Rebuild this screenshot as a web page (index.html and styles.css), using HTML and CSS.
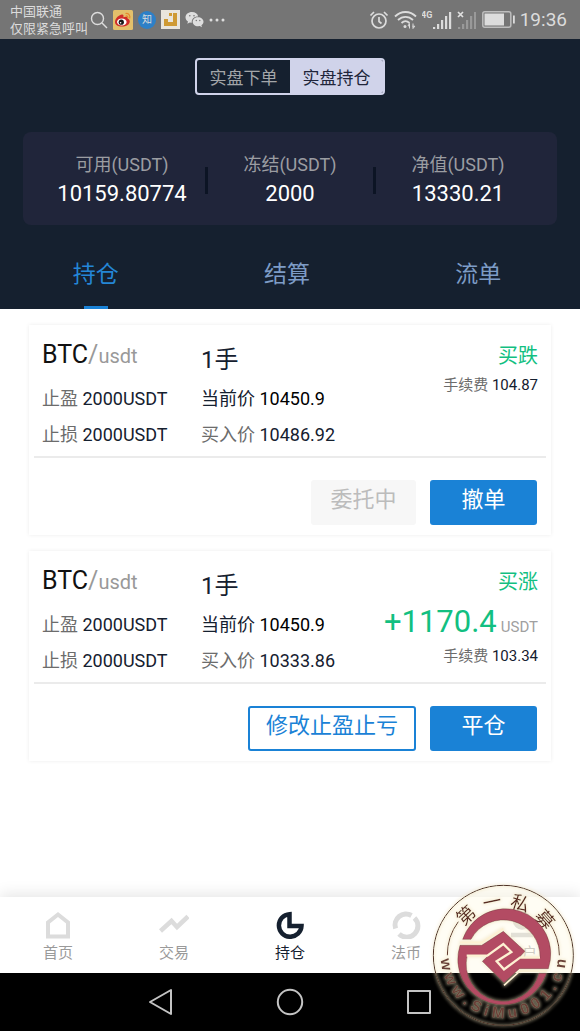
FILE: index.html
```html
<!DOCTYPE html>
<html lang="zh-CN">
<head>
<meta charset="utf-8">
<meta name="viewport" content="width=device-width, initial-scale=1">
<title>实盘持仓</title>
<link rel="stylesheet" href="styles.css">
</head>
<body>
<div class="screen">
  <div class="status">
    <div class="carrier"><span>中国联通</span><span>仅限紧急呼叫</span></div>
    <div class="notices">
      <svg width="18" height="18" viewBox="0 0 18 18" fill="none" stroke="#dcdcdc" stroke-width="1.4"><circle cx="7.5" cy="7.5" r="6"/><path d="M12 12l5 5"/></svg>
      <svg width="20" height="20" viewBox="0 0 20 20"><rect width="20" height="20" rx="1.5" fill="#e3c06b"/><path d="M2 12c0-4 5-8 7.500-7.500 1.500.4 1 2 .8 2.800 2-.9 4.500-.8 4.300 1.200 3 1.500 2.500 4 1 5.700-3 3.500-13.600 3.500-13.600-2.200z" fill="#d02c28"/><ellipse cx="8.800" cy="12" rx="4.800" ry="3.500" fill="#fff"/><circle cx="8.300" cy="12.200" r="2.600" fill="#191919"/><circle cx="7.600" cy="12.800" r=".8" fill="#fff"/><path d="M12.500 3.500c3-.5 5 2 4.200 4.800M12.800 6c1.500-.2 2.300.8 2 2" fill="none" stroke="#e8862b" stroke-width="1.200"/></svg>
      <span class="zhihu">知</span>
      <svg width="19" height="19" viewBox="0 0 19 19"><rect width="19" height="19" fill="#e9e5dc"/><path d="M3 9h4v3h5V3h4v13H3zM8 3h3v3H8z" fill="#cf9a33"/></svg>
      <svg width="19" height="17" viewBox="0 0 19 17"><path d="M7 1C3.200 1 .5 3.400.5 6.300c0 1.800 1 3.200 2.500 4.200l-.7 2.200 2.500-1.300 2 .3C6.300 8 9 5.300 13.200 5.400 12.600 2.800 10.200 1 7 1z" fill="#dedede"/><path d="M13 6.300c-3 0-5.300 2-5.300 4.500s2.300 4.500 5.300 4.500l1.800-.3 2.200 1.200-.6-1.900c1.300-.9 2.100-2.100 2.100-3.500 0-2.500-2.500-4.500-5.500-4.500z" fill="#dedede"/><g fill="#757575"><circle cx="4.800" cy="4.800" r=".8"/><circle cx="9" cy="4.800" r=".8"/><circle cx="11.300" cy="9.500" r=".7"/><circle cx="14.800" cy="9.500" r=".7"/></g></svg>
      <svg width="16" height="4" viewBox="0 0 16 4" fill="#dedede"><circle cx="2" cy="2" r="1.500"/><circle cx="8" cy="2" r="1.500"/><circle cx="14" cy="2" r="1.500"/></svg>
    </div>
    <div class="system">
      <svg width="20" height="20" viewBox="0 0 20 20" fill="none" stroke="#dcdcdc" stroke-width="1.700"><circle cx="10" cy="11" r="7"/><path d="M10 7v4.500l2.500 2M1.500 5.500L5 2M18.500 5.500L15 2"/></svg>
      <svg width="23" height="20" viewBox="0 0 23 20" fill="none" stroke="#dcdcdc" stroke-width="1.800"><path d="M1 6.500c6-6 15-6 21 0M4 10c4.500-4.300 10.500-4.300 15 0M7.500 13c2.500-2.300 5.500-2.300 8 0"/><circle cx="11" cy="16.500" r="1.500" fill="#dcdcdc" stroke="none"/><path d="M15.500 18.500v-5l-1.500 2.300h2M19 13.500v5l1.800-2.300h-2.300" stroke-width="1"/></svg>
      <svg width="30" height="20" viewBox="0 0 30 20"><text class="net" x="-1" y="8">4G</text><path d="M11 17h2.200v2H11zM15 14h2.200v5H15zM19 10h2.200v9H19zM23 6h2.200v13H23zM27 2h2.200v17H27z" fill="#dcdcdc"/></svg>
      <svg width="20" height="20" viewBox="0 0 20 20"><path d="M1 17h2.200v2H1zM5 14h2.200v5H5zM9 10h2.200v9H9zM13 6h2.200v13H13zM17 2h2v17h-2z" fill="#999"/><path d="M1 2l5 5M6 2L1 7" stroke="#e0e0e0" stroke-width="1.700"/></svg>
      <svg width="33" height="17" viewBox="0 0 33 17"><rect x=".8" y=".8" width="28" height="15.400" rx="2" fill="none" stroke="#bdbdbd" stroke-width="1.500"/><rect x="2.500" y="2.500" width="19.500" height="12" fill="#dcdcdc"/><path d="M31 4.500h1.800v8H31z" fill="#dcdcdc"/></svg>
      <span class="clock">19:36</span>
    </div>
  </div>

  <header class="top">
    <div class="switch"><button type="button">实盘下单</button><button type="button" class="on">实盘持仓</button></div>
    <dl class="stats">
      <div><dt>可用(USDT)</dt><dd>10159.80774</dd></div>
      <div><dt>冻结(USDT)</dt><dd>2000</dd></div>
      <div><dt>净值(USDT)</dt><dd>13330.21</dd></div>
    </dl>
    <nav class="tabs"><button type="button" class="on">持仓</button><button type="button">结算</button><button type="button">流单</button></nav>
  </header>

  <main class="list">
    <article class="card">
      <div class="info">
        <div><h2>BTC<i>/</i><small>usdt</small></h2><p>止盈 <b>2000USDT</b></p><p>止损 <b>2000USDT</b></p></div>
        <div><h3>1手</h3><p class="now">当前价 <b>10450.9</b></p><p>买入价 <b>10486.92</b></p></div>
        <div class="side"><strong>买跌</strong><p>手续费 <b>104.87</b></p></div>
      </div>
      <div class="actions"><button type="button" class="muted" disabled>委托中</button><button type="button" class="solid">撤单</button></div>
    </article>
    <article class="card">
      <div class="info">
        <div><h2>BTC<i>/</i><small>usdt</small></h2><p>止盈 <b>2000USDT</b></p><p>止损 <b>2000USDT</b></p></div>
        <div><h3>1手</h3><p class="now">当前价 <b>10450.9</b></p><p>买入价 <b>10333.86</b></p></div>
        <div class="side"><strong>买涨</strong><div class="profit">+1170.4 <small>USDT</small></div><p>手续费 <b>103.34</b></p></div>
      </div>
      <div class="actions"><button type="button" class="line">修改止盈止亏</button><button type="button" class="solid">平仓</button></div>
    </article>
  </main>

  <nav class="bottom">
    <a href="#home"><svg viewBox="0 0 30 28"><path d="M5 25.500V11.500L15 3.500l10 8v14z" fill="none" stroke="#dcdcdc" stroke-width="4"/></svg>首页</a>
    <a href="#trade"><svg viewBox="0 0 30 28"><path d="M1.500 20l11-10 5.500 6L29 5.500" fill="none" stroke="#dcdcdc" stroke-width="4.500"/></svg>交易</a>
    <a href="#hold" class="on"><svg viewBox="0 0 30 28"><path d="M14.500 3.200A11.300 11.300 0 1 0 26.500 15H14.500z" fill="none" stroke="#15202f" stroke-width="4.500"/></svg>持仓</a>
    <a href="#coin"><svg viewBox="0 0 30 28"><g fill="none" stroke="#dcdcdc" stroke-width="5"><path d="M4.600 17.500A11 11 0 0 1 20.500 4.500"/><path d="M23.500 7A11 11 0 0 1 8 23"/></g></svg>法币</a>
    <a href="#me"><svg viewBox="0 0 30 28"><circle cx="15" cy="9.500" r="7" fill="none" stroke="#c4c4c4" stroke-width="4.500"/><path d="M4 24h22" stroke="#c4c4c4" stroke-width="4.500"/></svg>账户</a>
  </nav>

  <div class="keys">
    <button type="button" aria-label="返回"><svg viewBox="0 0 28 28"><path d="M24 2v24L3 14z"/></svg></button>
    <button type="button" aria-label="主屏幕"><svg viewBox="0 0 28 28"><circle cx="14" cy="14" r="12.200"/></svg></button>
    <button type="button" aria-label="最近任务"><svg viewBox="0 0 28 28"><rect x="3" y="3" width="22" height="22"/></svg></button>
  </div>

  <svg class="stamp" viewBox="0 0 465 465" aria-label="第一私募">
    <defs>
      <filter id="glow" x="-20%" y="-20%" width="140%" height="140%">
        <feMorphology in="SourceAlpha" operator="dilate" radius="2"/><feGaussianBlur stdDeviation="4"/>
        <feComponentTransfer result="a"><feFuncA type="linear" slope=".45"/></feComponentTransfer>
        <feFlood flood-color="#efdfb8"/><feComposite in2="a" operator="in" result="g"/>
        <feMerge><feMergeNode in="g"/><feMergeNode in="SourceGraphic"/></feMerge>
      </filter>
      <clipPath id="upper"><path d="M0 0h465v291H0z"/></clipPath>
    </defs>
    <circle cx="235" cy="238" r="210" fill="#fffcea" fill-opacity=".5" clip-path="url(#upper)"/>
    <g filter="url(#glow)">
      <circle cx="235" cy="238" r="210" fill="none" stroke="#4a2a20" stroke-width="3"/>
      <path d="M100 137A168 168 0 0 0 67 238M370 137A168 168 0 0 1 403 238" fill="none" stroke="#5a3024" stroke-width="3"/>
      <g class="seal">
        <text x="235" y="94" transform="rotate(-43 235 238)">第</text>
        <text x="235" y="94" transform="rotate(-12 235 238)">一</text>
        <text x="235" y="94" transform="rotate(18 235 238)">私</text>
        <text x="235" y="94" transform="rotate(49 235 238)">募</text>
      </g>
      <g class="site">
        <text x="235" y="426" transform="rotate(81 235 238)">w</text>
        <text x="235" y="426" transform="rotate(66 235 238)">w</text>
        <text x="235" y="426" transform="rotate(51 235 238)">w</text>
        <text x="235" y="426" transform="rotate(39 235 238)">.</text>
        <text x="235" y="426" transform="rotate(28 235 238)">S</text>
        <text x="235" y="426" transform="rotate(17 235 238)">i</text>
        <text x="235" y="426" transform="rotate(5 235 238)">M</text>
        <text x="235" y="426" transform="rotate(-9 235 238)">u</text>
        <text x="235" y="426" transform="rotate(-22 235 238)">0</text>
        <text x="235" y="426" transform="rotate(-34 235 238)">0</text>
        <text x="235" y="426" transform="rotate(-47 235 238)">1</text>
        <text x="235" y="426" transform="rotate(-57 235 238)">.</text>
        <text x="235" y="426" transform="rotate(-68 235 238)">c</text>
        <text x="235" y="426" transform="rotate(-82 235 238)">n</text>
      </g>
      <path fill="#b34b64" stroke="#74303c" stroke-width="1.500" d="M113 190A134 134 0 0 1 370 278H283L237 320 172 256 191 238H127A110 110 0 0 0 342 292H364A134 134 0 0 1 105 208H170L235 166 300 226 281 246H345A110 110 0 0 0 138 190z"/>
      <path d="M125 239H187L235 204 259 228 215 256 237 280 285 245H345" fill="none" stroke="#fdf1d2" stroke-width="7"/>
      <path d="M105 199H170L235 158M366 285H285L237 328" fill="none" stroke="#fdf1d2" stroke-width="5"/>
    </g>
  </svg>
</div>
</body>
</html>
```
FILE: styles.css
```css
* { box-sizing: border-box; margin: 0; padding: 0; }
body { font-family: Roboto, "Noto Sans CJK SC", sans-serif; background: #fff; color: #15202f; }
button { font: inherit; border: 0; background: none; color: inherit; }
b, i, strong, h2, h3 { font-weight: 400; font-style: normal; }
.screen { position: relative; min-height: 100vh; display: flex; flex-direction: column; }

.status { height: 39px; background: #757575; color: #dcdcdc; display: flex; align-items: center; padding: 0 13px 0 10px; }
.carrier { display: flex; flex-direction: column; font-size: 13px; line-height: 17px; width: 80px; white-space: nowrap; }
.notices { display: flex; align-items: center; gap: 5px; }
.zhihu { width: 18px; height: 18px; border-radius: 50%; background: #2d80c8; font-size: 10px; line-height: 18px; text-align: center; }
.system { display: flex; align-items: center; gap: 5px; margin-left: auto; }
.net { font: 700 9px Roboto, sans-serif; fill: #dcdcdc; }
.clock { font-size: 19px; }

.top { background: #15202f; padding-top: 19px; }
.switch { width: 190px; height: 37px; margin: 0 auto; display: flex; border: 2px solid #d0d3ea; border-radius: 4px; overflow: hidden; }
.switch button { flex: 1; font-size: 17px; color: #a3a6a9; }
.switch .on { background: #d0d3ea; color: #20253a; }
.stats { margin: 37px 23px 0; padding: 21px 15px 0; height: 93px; background: #20253a; border-radius: 8px; display: flex; text-align: center; }
.stats div { flex: 1; position: relative; }
.stats div + div::before { content: ""; position: absolute; left: -1px; top: 14px; width: 3px; height: 27px; background: #0c1424; }
.stats dt { font-size: 18px; line-height: 24px; color: #9b9da2; }
.stats dd { font-size: 22px; line-height: 34px; color: #fff; }
.tabs { display: flex; padding-right: 6px; margin-top: 12px; height: 72px; }
.tabs button { flex: 1; font-size: 23px; padding-bottom: 3px; color: #7d9cc6; position: relative; }
.tabs .on { color: #2486d6; }
.tabs .on::after { content: ""; position: absolute; left: 50%; bottom: 0; width: 24px; height: 3px; margin-left: -12px; background: #1a82d6; }

.list { flex: 1; padding: 16px 29px; display: flex; flex-direction: column; gap: 16px; }
.card { box-shadow: 0 0 4px rgba(0, 0, 0, .08); background: #fff; }
.info { display: grid; grid-template-columns: 159px 1fr auto; margin: 0 5px; padding: 8px 8px 3px; border-bottom: 2px solid #ebebeb; }
.info h2, .info h3 { line-height: 44px; height: 48px; font-size: 24px; }
.info h2 { color: #111; font-size: 25px; }
.info h2 i, .info h2 small { color: #999; }
.info h2 small { font-size: 20px; }
.info h3 { padding-top: 5px; color: #15202f; }
.info p { font-size: 18px; line-height: 36px; color: #6c6c6c; white-space: nowrap; }
.info p b, .info .now { color: #15202f; }
.info .now b { color: #000; }
.side { text-align: right; padding-top: 3px; }
.side strong { display: block; font-size: 20px; line-height: 40px; color: #12bf81; }
.info .side p { font-size: 15px; line-height: 18px; }
.profit { font-size: 31px; line-height: 40px; color: #12bf81; display: flex; align-items: baseline; justify-content: flex-end; gap: 4px; }
.profit small { font-size: 15px; color: #a0a0a0; }
.actions { display: flex; justify-content: flex-end; gap: 14px; padding: 22px 14px 10px; }
.actions button { height: 45px; border-radius: 3px; font-size: 22px; line-height: 30px; padding: 0 16px 6px; }
.actions .solid { width: 107px; background: #1a82d6; color: #fff; }
.actions .muted { width: 105px; background: #f7f7f7; color: #bcbcbc; }
.actions .line { border: 2px solid #1a82d6; color: #1a82d6; }

.bottom { display: flex; height: 76px; padding-top: 14px; background: #fff; box-shadow: 0 -3px 14px rgba(0, 0, 0, .1); }
.bottom a { flex: 1; display: flex; flex-direction: column; align-items: center; font-size: 15px; line-height: 28px; color: #9a9a9a; text-decoration: none; }
.bottom svg { width: 30px; height: 28px; }
.bottom .on { color: #15202f; }
.keys { height: 58px; background: #000; display: flex; justify-content: center; gap: 101px; }
.keys svg { width: 28px; height: 28px; display: block; fill: none; stroke: #c4c4c4; stroke-width: 2; stroke-linejoin: round; }

.stamp { position: absolute; right: 0; bottom: 0; width: 155px; height: 155px; pointer-events: none; }
.seal { font: 56px "Noto Sans CJK SC", sans-serif; fill: #5a2c22; text-anchor: middle; }
.site { font: 700 46px "Liberation Sans", sans-serif; fill: #6b4038; text-anchor: middle; }
```
